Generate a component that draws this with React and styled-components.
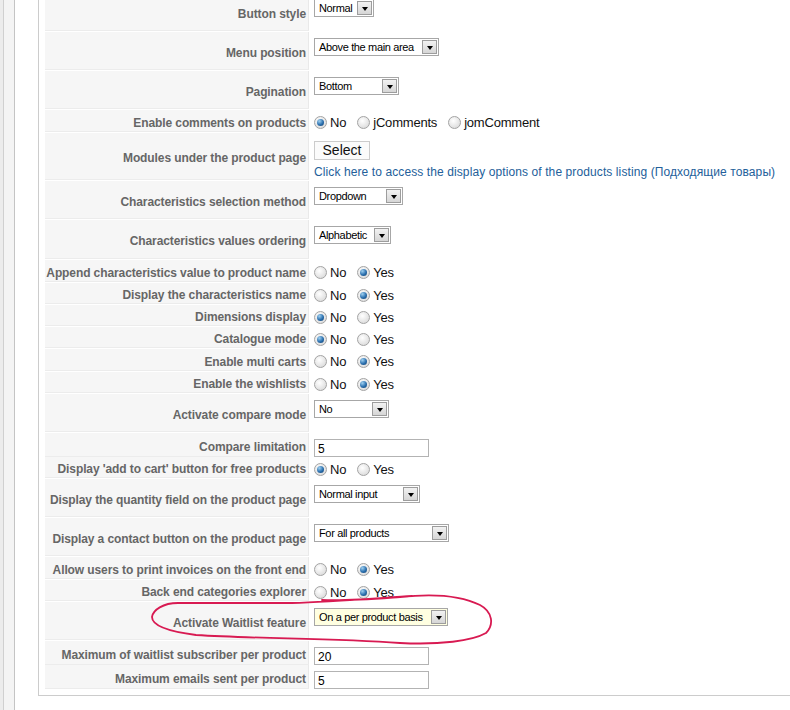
import React from "react";
import styled, { createGlobalStyle } from "styled-components";

const GlobalStyle = createGlobalStyle`
  html, body {
    margin: 0;
    padding: 0;
    background: #ffffff;
    overflow: hidden;
  }
  body {
    font-family: "Liberation Sans", Arial, sans-serif;
  }
`;

const rows = [
  { label: "Button style", h: 39, type: "select", value: "Normal", w: 60 },
  { label: "Menu position", h: 39, type: "select", value: "Above the main area", w: 125 },
  { label: "Pagination", h: 39, type: "select", value: "Bottom", w: 85 },
  { label: "Enable comments on products", h: 23, type: "radio", options: ["No", "jComments", "jomComment"], checked: 0 },
  { label: "Modules under the product page", h: 48, type: "modules" },
  { label: "Characteristics selection method", h: 39, type: "select", value: "Dropdown", w: 89 },
  { label: "Characteristics values ordering", h: 40, type: "select", value: "Alphabetic", w: 77 },
  { label: "Append characteristics value to product name", h: 23, type: "radio", checked: 1 },
  { label: "Display the characteristics name", h: 22, type: "radio", checked: 1 },
  { label: "Dimensions display", h: 22, type: "radio", checked: 0 },
  { label: "Catalogue mode", h: 22, type: "radio", checked: 0 },
  { label: "Enable multi carts", h: 23, type: "radio", checked: 1 },
  { label: "Enable the wishlists", h: 22, type: "radio", checked: 1 },
  { label: "Activate compare mode", h: 39, type: "select", value: "No", w: 75 },
  { label: "Compare limitation", h: 24, type: "input", value: "5" },
  { label: "Display 'add to cart' button for free products", h: 22, type: "radio", checked: 0 },
  { label: "Display the quantity field on the product page", h: 39, type: "select", value: "Normal input", w: 106 },
  { label: "Display a contact button on the product page", h: 39, type: "select", value: "For all products", w: 135 },
  { label: "Allow users to print invoices on the front end", h: 23, type: "radio", checked: 1 },
  { label: "Back end categories explorer", h: 22, type: "radio", checked: 1 },
  { label: "Activate Waitlist feature", h: 39, type: "select", value: "On a per product basis", w: 134, bg: "#ffffe1" },
  { label: "Maximum of waitlist subscriber per product", h: 24, type: "input", value: "20" },
  { label: "Maximum emails sent per product", h: 24, type: "input", value: "5" },
];

const Select = ({ value, w, bg }) => (
  <SelectBox $w={w} $bg={bg}>
    <span>{value}</span>
    <SelectArrow />
  </SelectBox>
);

const RadioGroup = ({ options = ["No", "Yes"], checked }) => (
  <StyledRadios>
    {options.map((opt, i) => (
      <RadioOption key={opt}>
        <RadioDot $on={i === checked} />
        {opt}
      </RadioOption>
    ))}
  </StyledRadios>
);

const renderValue = (row) => {
  switch (row.type) {
    case "select":
      return <Select value={row.value} w={row.w} bg={row.bg} />;
    case "radio":
      return <RadioGroup options={row.options} checked={row.checked} />;
    case "input":
      return <TextInput>{row.value}</TextInput>;
    case "modules":
      return (
        <>
          <SelectButton>Select</SelectButton>
          <ListingLink>
            Click here to access the display options of the products listing
            (Подходящие товары)
          </ListingLink>
        </>
      );
    default:
      return null;
  }
};

const App = () => {
  return (
    <StyledPage>
      <GlobalStyle />
      <StyledGutter />
      <StyledMain>
        <StyledFieldset>
          {rows.map((row) => (
            <StyledRow key={row.label} $h={row.h}>
              <StyledKey>{row.label}</StyledKey>
              <StyledValue $type={row.type}>{renderValue(row)}</StyledValue>
            </StyledRow>
          ))}
        </StyledFieldset>
      </StyledMain>
      {/* hand drawn marker around the waitlist option */}
      <Scribble viewBox="0 0 790 710">
        <path
          d="M 412 596 C 380 598 330 602 292 603 L 178 603 C 163 603 153 610 152 617 C 152 625 165 631 196 635 C 260 639 330 638 400 643 C 440 645 472 641 486 633 C 494 625 493 612 480 605 C 462 596 436 593 400 597 C 372 599 348 601 322 600"
          fill="none"
          stroke="#d81a52"
          strokeWidth="1.8"
          strokeLinecap="round"
          strokeLinejoin="round"
        />
      </Scribble>
    </StyledPage>
  );
};

const StyledPage = styled.div`
  position: relative;
  display: flex;
  width: 790px;
  height: 710px;
  padding-left: 3px;
  box-sizing: border-box;
  background: #ececec;
  overflow: hidden;
`;

const StyledGutter = styled.div`
  width: 12px;
  flex: none;
  box-sizing: border-box;
  background: #f4f4f4;
  border-left: 1px solid #d0d0d0;
  border-right: 1px solid #c4c4c4;
`;

const StyledMain = styled.div`
  flex: 1;
  background: #ffffff;
  padding-left: 23px;
`;

const StyledFieldset = styled.div`
  margin-top: -7px;
  border-left: 1px solid #cccccc;
  border-bottom: 1px solid #cccccc;
  padding: 0 0 6px 6px;
`;

const StyledRow = styled.div`
  display: grid;
  grid-template-columns: 264px 1fr;
  column-gap: 1px;
  height: ${(p) => p.$h - 1}px;
  margin-bottom: 1px;
`;

const StyledKey = styled.div`
  display: flex;
  align-items: center;
  justify-content: flex-end;
  box-sizing: border-box;
  padding: 4px 2px 0 0;
  background: #f6f6f6;
  border-right: 1px solid #e9e9e9;
  border-bottom: 1px solid #ececec;
  color: #666666;
  font-size: 12px;
  font-weight: bold;
  letter-spacing: -0.1px;
  white-space: nowrap;
`;

const StyledValue = styled.div`
  display: flex;
  flex-direction: column;
  align-items: flex-start;
  justify-content: ${(p) => (p.$type === "radio" ? "center" : "flex-start")};
  padding: ${(p) =>
    p.$type === "radio" ? "3px 4px 0" : p.$type === "modules" ? "8px 4px 0" : "6px 4px 0"};
  box-sizing: border-box;
`;

const SelectBox = styled.div`
  display: flex;
  align-items: center;
  justify-content: space-between;
  box-sizing: border-box;
  width: ${(p) => p.$w}px;
  height: 18px;
  padding: 0 1px 1px 4px;
  border: 1px solid #a7a7a7;
  background: ${(p) => p.$bg || "#ffffff"};
  color: #000000;
  font-size: 11px;
  letter-spacing: -0.35px;
  white-space: nowrap;
`;

const SelectArrow = styled.span`
  display: flex;
  align-items: center;
  justify-content: center;
  width: 15px;
  height: 14px;
  margin-top: 1px;
  box-sizing: border-box;
  border: 1px solid #9d9d9d;
  background: linear-gradient(#f2f2f2, #d6d6d6);

  &::after {
    content: "";
    margin-top: 2px;
    border-left: 3.5px solid transparent;
    border-right: 3.5px solid transparent;
    border-top: 4px solid #000000;
  }
`;

const StyledRadios = styled.div`
  display: flex;
  align-items: center;
`;

const RadioOption = styled.label`
  display: flex;
  align-items: center;
  gap: 3px;
  margin-right: 11px;
  color: #111111;
  font-size: 13px;
  letter-spacing: -0.2px;
`;

const RadioDot = styled.span`
  position: relative;
  width: 13px;
  height: 13px;
  box-sizing: border-box;
  border-radius: 50%;
  border: 1px solid #a3a3a3;
  background: radial-gradient(circle at 40% 35%, #ffffff, #dedede 75%);

  &::after {
    content: "";
    display: ${(p) => (p.$on ? "block" : "none")};
    position: absolute;
    left: 2px;
    top: 2px;
    width: 7px;
    height: 7px;
    border-radius: 50%;
    background: radial-gradient(circle at 35% 30%, #9fd0f0, #2a6fae 55%, #123d6a);
  }
`;

const TextInput = styled.div`
  box-sizing: border-box;
  width: 115px;
  height: 18px;
  padding: 1px 3px 0;
  border: 1px solid #b3b3b3;
  color: #000000;
  font-size: 12px;
  line-height: 16px;
`;

const SelectButton = styled.div`
  box-sizing: border-box;
  width: 56px;
  height: 19px;
  border: 1px solid #cccccc;
  background: #fbfbfb;
  color: #111111;
  font-size: 14px;
  line-height: 17px;
  text-align: center;
`;

const ListingLink = styled.a`
  margin-top: 5px;
  color: #23609a;
  font-size: 12px;
  letter-spacing: 0.1px;
  white-space: nowrap;
  text-decoration: none;
`;

const Scribble = styled.svg`
  position: absolute;
  left: 0;
  top: 0;
  width: 790px;
  height: 710px;
  pointer-events: none;
`;

export default App;
